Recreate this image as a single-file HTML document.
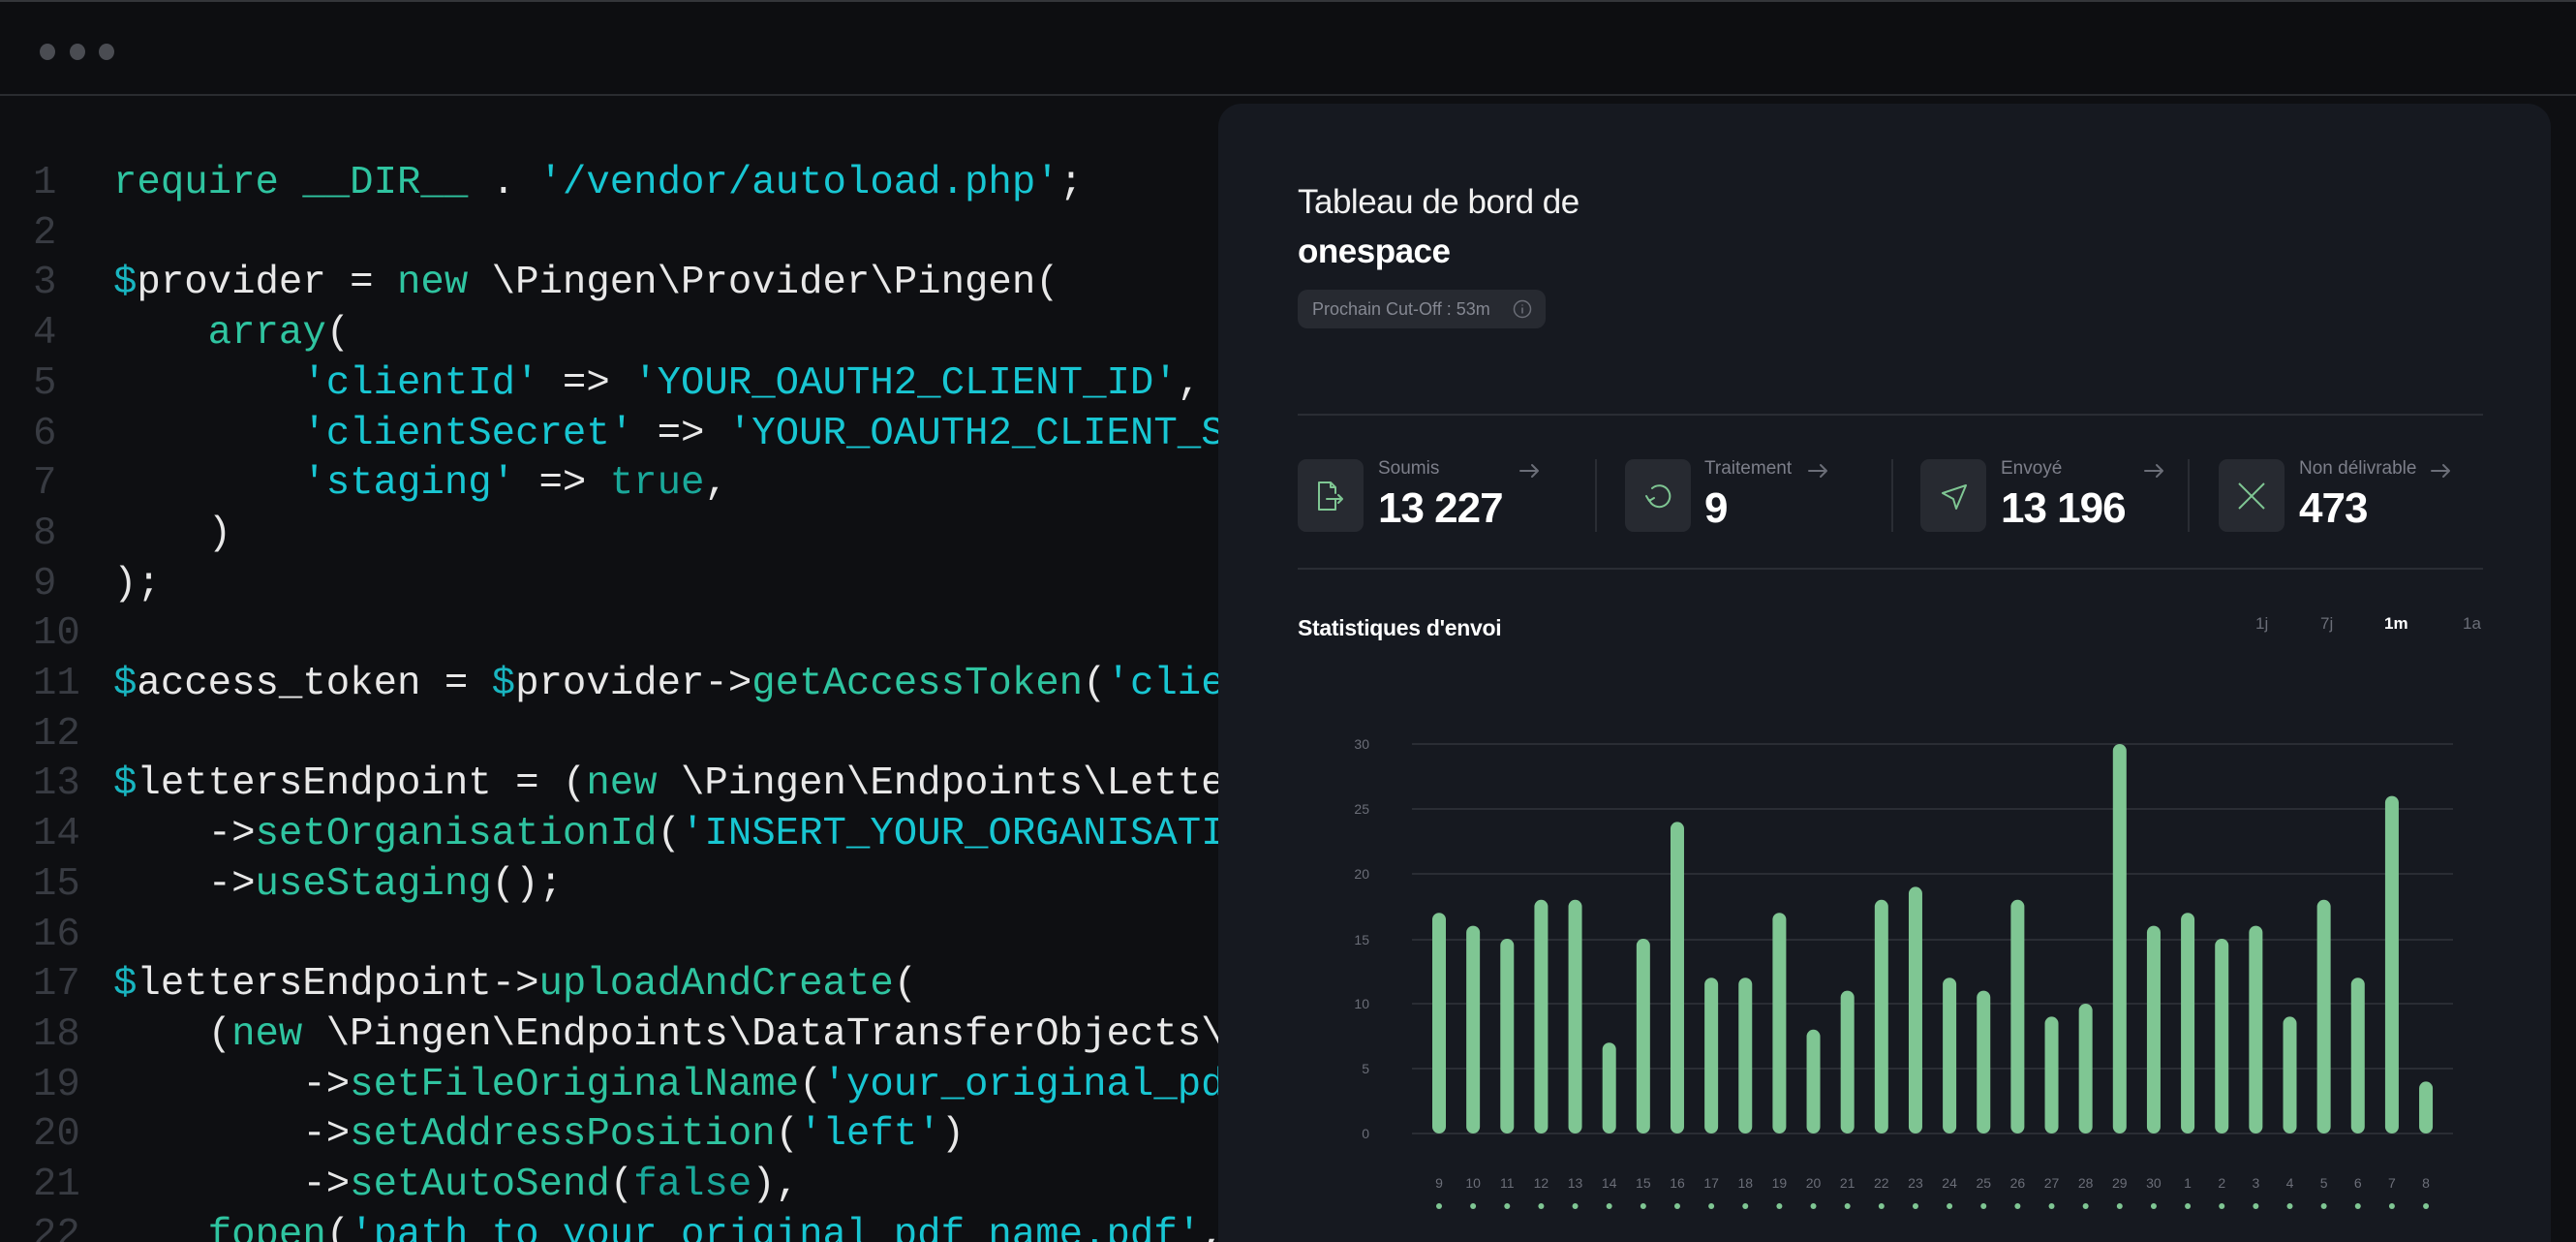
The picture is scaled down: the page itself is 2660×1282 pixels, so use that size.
<!DOCTYPE html>
<html><head><meta charset="utf-8"><style>
*{margin:0;padding:0;box-sizing:border-box}
html{width:2660px;height:1282px;overflow:hidden}
body{width:2660px;height:1282px;background:#0e0f12;overflow:hidden;position:relative;font-family:"Liberation Sans",sans-serif}
.top{position:absolute;left:0;top:0;width:2660px;height:99px;background:#0d0e11;border-top:2px solid #34363a;border-bottom:2px solid #2a2c30}
.dot{position:absolute;top:45px;width:16px;height:17px;border-radius:50%;background:#4a4c52}
pre{position:absolute;top:164px;font-family:"Liberation Mono",monospace;font-size:40.7px;line-height:51.7px;color:#e8e8e8}
.ln{left:34px;color:#383b42}
.code{left:117px}
.k{color:#2fc4a0}.s{color:#18c6d2}.v{color:#19b5c0}.b{color:#1aa89a}.f{color:#2fc4a0}
.panel{position:absolute;left:1258px;top:107px;width:1376px;height:1175px;background:#161920;border-radius:24px 24px 0 0}
.abs{position:absolute}
.lbl{color:#7d7f8a;font-size:19px}
.num{color:#fff;font-size:44px;font-weight:bold;letter-spacing:-1px}
.ib{position:absolute;top:474px;width:68px;height:75px;background:#272a31;border-radius:9px}
.sep{position:absolute;top:474px;width:2px;height:75px;background:#2a2d34}
</style></head><body>
<div class="top"></div>
<div class="dot" style="left:41px"></div><div class="dot" style="left:72px"></div><div class="dot" style="left:102px"></div>
<pre class="ln">1
2
3
4
5
6
7
8
9
10
11
12
13
14
15
16
17
18
19
20
21
22</pre>
<pre class="code"><span class="k">require</span> <span class="k">__DIR__</span> . <span class="s">'/vendor/autoload.php'</span>;

<span class="v">$</span>provider = <span class="k">new</span> \Pingen\Provider\Pingen(
    <span class="k">array</span>(
        <span class="s">'clientId'</span> =&gt; <span class="s">'YOUR_OAUTH2_CLIENT_ID'</span>,
        <span class="s">'clientSecret'</span> =&gt; <span class="s">'YOUR_OAUTH2_CLIENT_SECRET'</span>,
        <span class="s">'staging'</span> =&gt; <span class="b">true</span>,
    )
);

<span class="v">$</span>access_token = <span class="v">$</span>provider-&gt;<span class="f">getAccessToken</span>(<span class="s">'client_credentials'</span>);

<span class="v">$</span>lettersEndpoint = (<span class="k">new</span> \Pingen\Endpoints\LettersEndpoint(<span class="v">$</span>access_token))
    -&gt;<span class="f">setOrganisationId</span>(<span class="s">'INSERT_YOUR_ORGANISATION_UUID_HERE'</span>)
    -&gt;<span class="f">useStaging</span>();

<span class="v">$</span>lettersEndpoint-&gt;<span class="f">uploadAndCreate</span>(
    (<span class="k">new</span> \Pingen\Endpoints\DataTransferObjects\Letter\LetterCreateAttributes())
        -&gt;<span class="f">setFileOriginalName</span>(<span class="s">'your_original_pdf_name.pdf'</span>)
        -&gt;<span class="f">setAddressPosition</span>(<span class="s">'left'</span>)
        -&gt;<span class="f">setAutoSend</span>(<span class="b">false</span>),
    <span class="f">fopen</span>(<span class="s">'path_to_your_original_pdf_name.pdf'</span>, <span class="s">'r'</span>)</pre>

<div class="panel"></div>
<div class="abs" style="left:1340px;top:189px;color:#f2f2f2;font-size:35px;letter-spacing:-0.5px">Tableau de bord de</div>
<div class="abs" style="left:1340px;top:240px;color:#fff;font-size:35px;font-weight:bold;letter-spacing:-0.5px">onespace</div>
<div class="abs" style="left:1340px;top:299px;width:256px;height:40px;background:#272a31;border-radius:10px;color:#858892;font-size:18px;line-height:40px;padding-left:15px">Prochain Cut-Off : 53m
<svg class="abs" style="left:222px;top:10px" width="20" height="20" viewBox="0 0 20 20"><circle cx="10" cy="10" r="8.5" fill="none" stroke="#6a6d76" stroke-width="1.5"/><path d="M10 8.5v6M10 5.5v1" stroke="#6a6d76" stroke-width="1.6"/></svg></div>
<div class="abs" style="left:1340px;top:427px;width:1224px;height:2px;background:#2a2d34"></div>
<div class="abs" style="left:1340px;top:586px;width:1224px;height:2px;background:#2a2d34"></div>

<div class="ib" style="left:1340px"></div>
<svg class="abs" style="left:1357px;top:494px" width="36" height="36" viewBox="0 0 36 36" fill="none" stroke="#7fc693" stroke-width="2" stroke-linejoin="round" stroke-linecap="round"><path d="M22 22v10H5V4h12l5 5v6M17 4v5h5M13 21h16M25 17l4 4-4 4"/></svg>
<div class="abs lbl" style="left:1423px;top:473px">Soumis</div>
<div class="abs num" style="left:1423px;top:500px">13 227</div>
<div class="sep" style="left:1647px"></div>
<div class="ib" style="left:1678px"></div>
<svg class="abs" style="left:1694px;top:495px" width="36" height="36" viewBox="0 0 36 36" fill="none" stroke="#7fc693" stroke-width="2" stroke-linecap="round" stroke-linejoin="round"><path d="M12 9a11 11 0 1 1-3 12"/><path d="M6 17l3 5 5-3"/></svg>
<div class="abs lbl" style="left:1760px;top:473px">Traitement</div>
<div class="abs num" style="left:1760px;top:500px">9</div>
<div class="sep" style="left:1953px"></div>
<div class="ib" style="left:1983px"></div>
<svg class="abs" style="left:2000px;top:495px" width="36" height="36" viewBox="0 0 36 36" fill="none" stroke="#7fc693" stroke-width="2" stroke-linejoin="round"><path d="M6 14l24-8-10 24-3-10z"/></svg>
<div class="abs lbl" style="left:2066px;top:473px">Envoyé</div>
<div class="abs num" style="left:2066px;top:500px">13 196</div>
<div class="sep" style="left:2259px"></div>
<div class="ib" style="left:2291px"></div>
<svg class="abs" style="left:2307px;top:494px" width="36" height="36" viewBox="0 0 36 36" fill="none" stroke="#7fc693" stroke-width="2"><path d="M5 5l26 26M31 5L5 31"/></svg>
<div class="abs lbl" style="left:2374px;top:473px">Non délivrable</div>
<div class="abs num" style="left:2374px;top:500px">473</div>
<svg class="abs" style="left:0;top:0" width="2660" height="1282">
<g fill="none" stroke="#6b6e78" stroke-width="2" stroke-linecap="round" stroke-linejoin="round">
<path d="M1570 486h18M1582 480l6 6-6 6"/><path d="M1868 486h18M1880 480l6 6-6 6"/><path d="M2215 486h18M2227 480l6 6-6 6"/><path d="M2511 486h18M2523 480l6 6-6 6"/></g>
</svg>
<div class="abs" style="left:1340px;top:635px;color:#fff;font-size:23px;font-weight:bold;letter-spacing:-0.3px">Statistiques d'envoi</div>
<div class="abs" style="left:2329px;top:634px;color:#6b6e78;font-size:17px">1j</div>
<div class="abs" style="left:2396px;top:634px;color:#6b6e78;font-size:17px">7j</div>
<div class="abs" style="left:2462px;top:634px;color:#fff;font-size:17px;font-weight:bold">1m</div>
<div class="abs" style="left:2543px;top:634px;color:#6b6e78;font-size:17px">1a</div>

<svg class="abs" style="left:0;top:0" width="2660" height="1282" font-family="Liberation Sans, sans-serif">
<g stroke="#2a2d34" stroke-width="2">
<line x1="1458" x2="2533" y1="768" y2="768"/><line x1="1458" x2="2533" y1="835" y2="835"/><line x1="1458" x2="2533" y1="902" y2="902"/><line x1="1458" x2="2533" y1="970" y2="970"/><line x1="1458" x2="2533" y1="1036" y2="1036"/><line x1="1458" x2="2533" y1="1103" y2="1103"/><line x1="1458" x2="2533" y1="1170" y2="1170"/></g>
<g fill="#6b6e78" font-size="14" text-anchor="end">
<text x="1414" y="773">30</text><text x="1414" y="840">25</text><text x="1414" y="907">20</text><text x="1414" y="975">15</text><text x="1414" y="1041">10</text><text x="1414" y="1108">5</text><text x="1414" y="1175">0</text></g>
<g id="bars" fill="#7fc693"></g>
<g id="lbls" fill="#6b6e78" font-size="14" text-anchor="middle"></g>
<g id="dots" fill="#7fc693"></g>
</svg>
<script>
var v=[17,16,15,18,18,7,15,24,12,12,17,8,11,18,19,12,11,18,9,10,30,16,17,15,16,9,18,12,26,4];
var l=[9,10,11,12,13,14,15,16,17,18,19,20,21,22,23,24,25,26,27,28,29,30,1,2,3,4,5,6,7,8];
var b='',t='',d='';
for(var i=0;i<30;i++){var x=1486+i*35.14,h=v[i]*13.4;
b+='<rect x="'+(x-7)+'" y="'+(1170-h)+'" width="14" height="'+h+'" rx="7"/>';
t+='<text x="'+x+'" y="1226">'+l[i]+'</text>';
d+='<circle cx="'+x+'" cy="1245" r="3"/>';}
document.getElementById('bars').innerHTML=b;
document.getElementById('lbls').innerHTML=t;
document.getElementById('dots').innerHTML=d;
</script>
</body></html>
